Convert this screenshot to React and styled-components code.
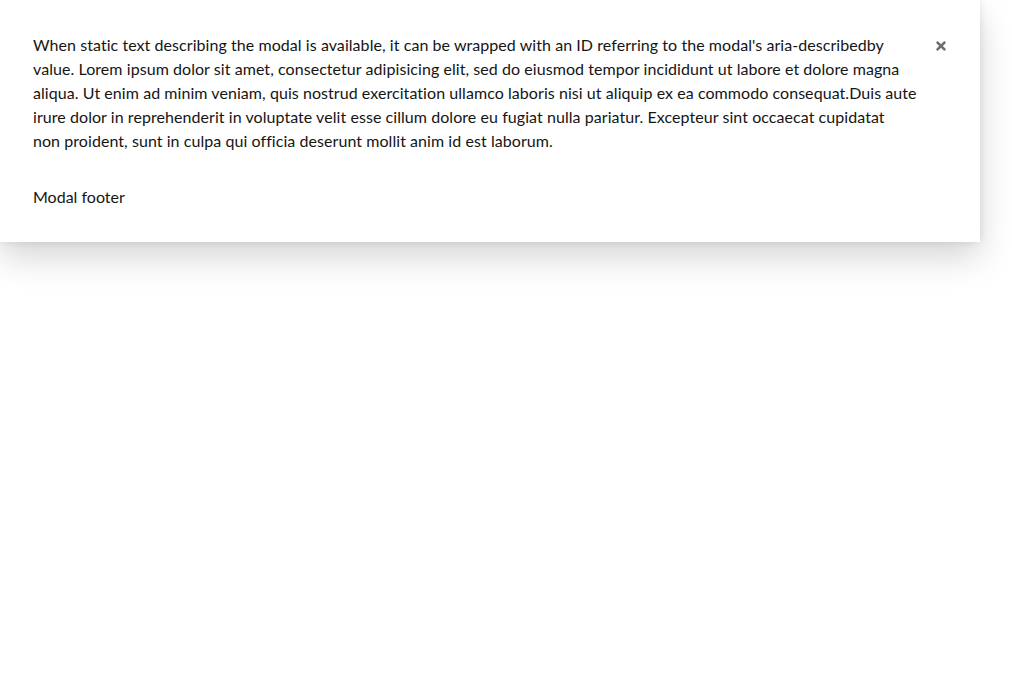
import React from "react";
import styled, { createGlobalStyle } from "styled-components";

const Global = createGlobalStyle`
  html, body { margin: 0; padding: 0; background: #ffffff; }
  body { font-family: Lato, "Noto Sans", sans-serif; color: #151515; }
`;

const Page = styled.div`
  min-height: 100vh;
  background: #ffffff;
`;

const Modal = styled.div`
  width: 980px;
  box-sizing: border-box;
  background: #ffffff;
  box-shadow: 0 16px 32px 0 rgba(3, 3, 3, 0.16), 0 0 8px 0 rgba(3, 3, 3, 0.1);
  padding: 33px 21px 33px 33px;
  display: flex;
  flex-direction: column;
  gap: 32px;
`;

const Header = styled.div`
  display: flex;
  align-items: flex-start;
  gap: 12px;
`;

const Body = styled.div`
  flex: 1;
  min-width: 0;
  font-size: 16px;
  line-height: 24px;
  letter-spacing: 0.06px;
  white-space: nowrap;
`;

const Close = styled.button`
  flex: none;
  border: none;
  background: transparent;
  width: 36px;
  height: 26px;
  padding: 0;
  display: flex;
  align-items: center;
  justify-content: center;
  color: #6a6e73;
  cursor: pointer;
`;

const Footer = styled.div`
  font-size: 16px;
  line-height: 24px;
`;

const lines = [
  "When static text describing the modal is available, it can be wrapped with an ID referring to the modal's aria-describedby",
  "value. Lorem ipsum dolor sit amet, consectetur adipisicing elit, sed do eiusmod tempor incididunt ut labore et dolore magna",
  "aliqua. Ut enim ad minim veniam, quis nostrud exercitation ullamco laboris nisi ut aliquip ex ea commodo consequat.Duis aute",
  "irure dolor in reprehenderit in voluptate velit esse cillum dolore eu fugiat nulla pariatur. Excepteur sint occaecat cupidatat",
  "non proident, sunt in culpa qui officia deserunt mollit anim id est laborum.",
];

export default function App() {
  return (
    <Page>
      <Global />
      <Modal role="dialog">
        <Header>
          <Body>
            {lines.map((l, i) => (
              <React.Fragment key={i}>
                {l}
                {i < lines.length - 1 && <br />}
              </React.Fragment>
            ))}
          </Body>
          <Close aria-label="Close">
            <svg width="12" height="14" viewBox="0 0 352 512" fill="currentColor">
              <path d="M242.72 256l100.07-100.07c12.28-12.28 12.28-32.19 0-44.48l-22.24-22.240c-12.28-12.28-32.19-12.28-44.48 0L176 189.28 75.93 89.21c-12.28-12.28-32.19-12.28-44.48 0L9.21 111.45c-12.28 12.28-12.28 32.19 0 44.48L109.28 256 9.21 356.07c-12.28 12.28-12.28 32.19 0 44.48l22.24 22.24c12.28 12.28 32.2 12.28 44.48 0L176 322.72l100.07 100.07c12.28 12.28 32.2 12.28 44.48 0l22.24-22.24c12.28-12.28 12.28-32.19 0-44.48L242.72 256z" />
            </svg>
          </Close>
        </Header>
        <Footer>Modal footer</Footer>
      </Modal>
    </Page>
  );
}
